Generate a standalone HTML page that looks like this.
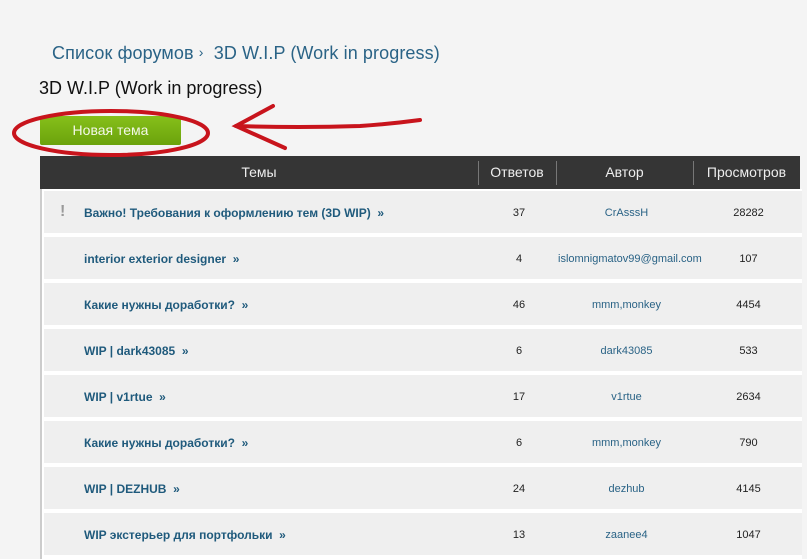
<!DOCTYPE html><html><head><meta charset="utf-8"><style>
body{margin:0;width:807px;height:555px;background:#f4f4f4;font-family:"Liberation Sans",sans-serif;overflow:hidden;position:relative}
.a{position:absolute;white-space:nowrap}
.bc{left:52px;top:43px;font-size:18px;color:#2a6386;letter-spacing:0.1px}
.h1{left:39px;top:78px;font-size:18px;color:#111}
.btn{left:40px;top:116px;width:141px;height:29px;background:linear-gradient(#86c01a,#6ba30c);font-size:14px;line-height:29px;text-align:center;border-radius:2px;color:#f4f8e8}
.hd{left:40px;top:156px;width:760px;height:33px;background:#353535;color:#eee;font-size:14px}
.hd div{position:absolute;top:0;line-height:33px;text-align:center}
.sep{position:absolute;top:5px;width:1px;height:24px;background:#777}
.tb{left:40px;top:189px;width:760px;height:370px;background:#fff;border-left:2px solid #ccc}
.row{position:absolute;left:2px;width:758px;height:42px;background:#efefef;font-size:12px}
.row div{position:absolute;top:0;line-height:44px}
.t{left:40px;color:#1f5a7c;font-weight:bold}
.n{text-align:center;color:#222;font-size:11px}
.au{text-align:center;color:#2a6386;font-size:11px}
</style></head><body>
<div class="a bc">Список форумов <span style="font-size:14px;position:relative;top:-2px">›</span>&nbsp; 3D W.I.P (Work in progress)</div>
<div class="a h1">3D W.I.P (Work in progress)</div>
<div class="a btn">Новая тема</div>
<div class="a hd"><div style="left:0;width:438px">Темы</div><span class="sep" style="left:438px"></span><div style="left:438px;width:78px">Ответов</div><span class="sep" style="left:516px"></span><div style="left:516px;width:137px">Автор</div><span class="sep" style="left:653px"></span><div style="left:653px;width:107px">Просмотров</div></div>
<div class="a tb">
<div class="row" style="top:2px"><div style="left:16px;color:#999;font-weight:bold;font-size:16px;line-height:42px">!</div><div class="t">Важно! Требования к оформлению тем (3D WIP) &nbsp;»</div><div class="n" style="left:436px;width:78px">37</div><div class="au" style="left:514px;width:137px">CrAsssH</div><div class="n" style="left:651px;width:107px">28282</div></div>
<div class="row" style="top:48px"><div class="t">interior exterior designer &nbsp;»</div><div class="n" style="left:436px;width:78px">4</div><div class="au" style="left:514px;width:137px">islomnigmatov99@gmail.com</div><div class="n" style="left:651px;width:107px">107</div></div>
<div class="row" style="top:94px"><div class="t">Какие нужны доработки? &nbsp;»</div><div class="n" style="left:436px;width:78px">46</div><div class="au" style="left:514px;width:137px">mmm,monkey</div><div class="n" style="left:651px;width:107px">4454</div></div>
<div class="row" style="top:140px"><div class="t">WIP | dark43085 &nbsp;»</div><div class="n" style="left:436px;width:78px">6</div><div class="au" style="left:514px;width:137px">dark43085</div><div class="n" style="left:651px;width:107px">533</div></div>
<div class="row" style="top:186px"><div class="t">WIP | v1rtue &nbsp;»</div><div class="n" style="left:436px;width:78px">17</div><div class="au" style="left:514px;width:137px">v1rtue</div><div class="n" style="left:651px;width:107px">2634</div></div>
<div class="row" style="top:232px"><div class="t">Какие нужны доработки? &nbsp;»</div><div class="n" style="left:436px;width:78px">6</div><div class="au" style="left:514px;width:137px">mmm,monkey</div><div class="n" style="left:651px;width:107px">790</div></div>
<div class="row" style="top:278px"><div class="t">WIP | DEZHUB &nbsp;»</div><div class="n" style="left:436px;width:78px">24</div><div class="au" style="left:514px;width:137px">dezhub</div><div class="n" style="left:651px;width:107px">4145</div></div>
<div class="row" style="top:324px"><div class="t">WIP экстерьер для портфольки &nbsp;»</div><div class="n" style="left:436px;width:78px">13</div><div class="au" style="left:514px;width:137px">zaanee4</div><div class="n" style="left:651px;width:107px">1047</div></div>
</div>
<svg class="a" style="left:0;top:0" width="807" height="555"><g fill="none" stroke="#c8141c" stroke-width="4" stroke-linecap="round">
<ellipse cx="111" cy="133" rx="97" ry="22"/>
<path d="M236 126 Q300 128 360 126 Q390 124 420 120"/><path d="M273 106 L236 126 L285 148"/></g></svg>
</body></html>
